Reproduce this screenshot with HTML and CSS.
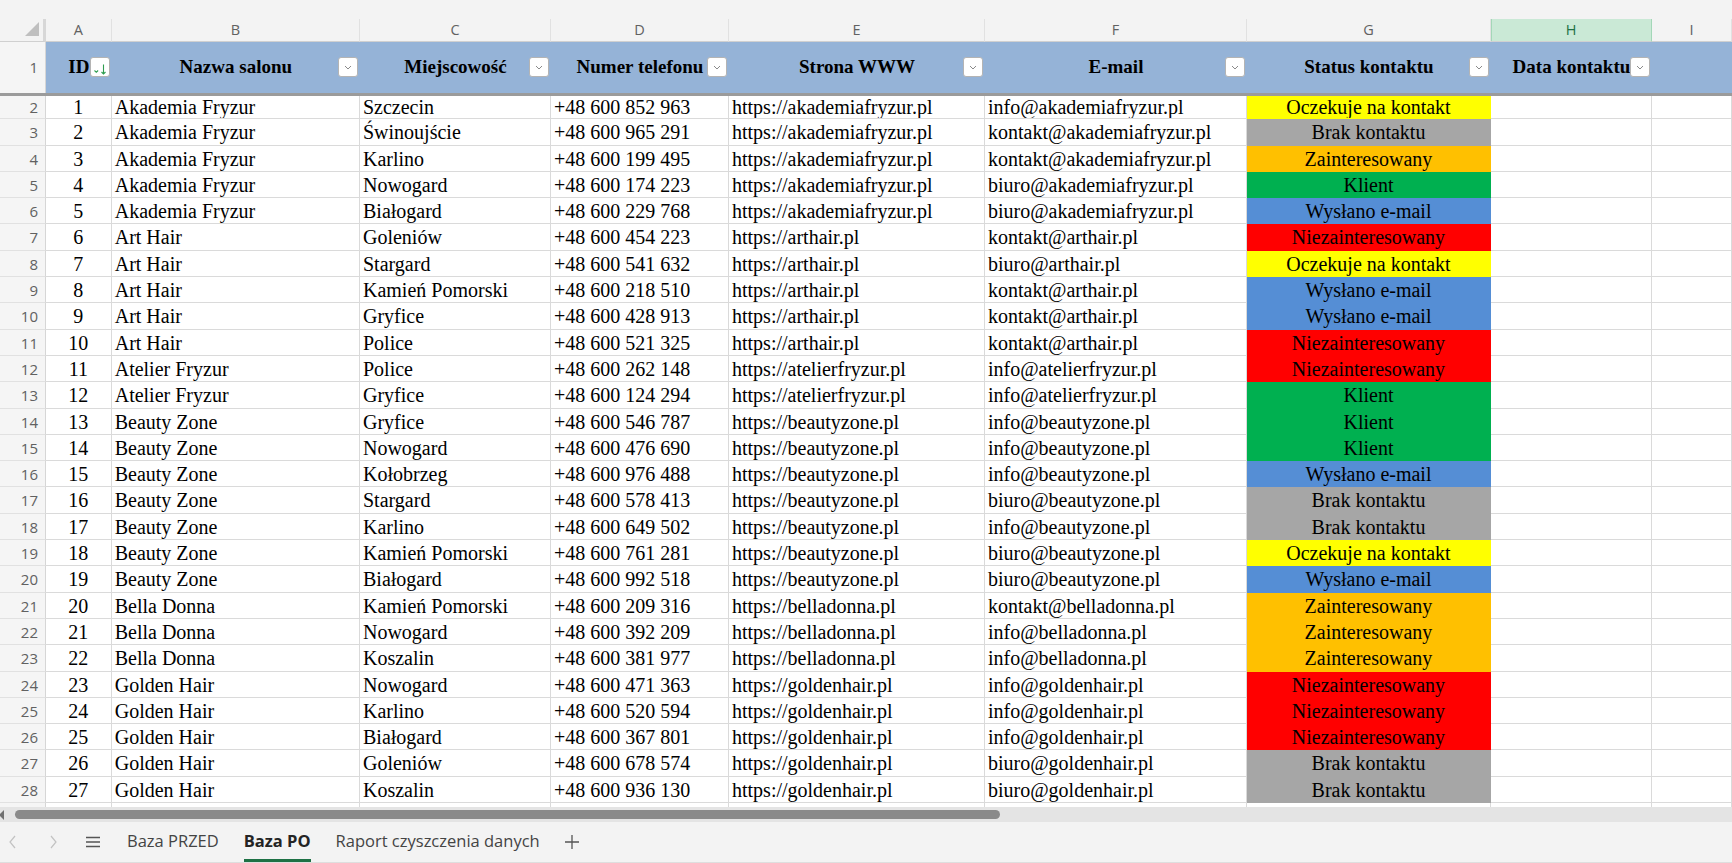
FILE: index.html
```html
<!DOCTYPE html>
<html lang="pl">
<head>
  <meta charset="UTF-8" />
  <title>Baza PO</title>
  <link rel="stylesheet" href="styles.css">
</head>
<body>

<div class="app">
  <div class="topstrip"></div>

  <div class="sheet">
    <div class="row colhead">
      <div class="corner"><span class="tri"></span></div>
      <div class="col">A</div>
      <div class="col">B</div>
      <div class="col">C</div>
      <div class="col">D</div>
      <div class="col">E</div>
      <div class="col">F</div>
      <div class="col">G</div>
      <div class="col sel">H</div>
      <div class="col">I</div>
    </div>

    <div class="row head">
      <div class="rh">1</div>
      <div class="hc">ID<span class="filter"><svg width="20" height="20" viewBox="0 0 20 20"><path d="M4.5 13.5 l1.8 1.8 l1.8 -1.8" fill="none" stroke="#2e9d4f" stroke-width="1.1"/><path d="M13.5 7.5 v9.5 M11.5 15 l2 2 l2 -2" fill="none" stroke="#2e9d4f" stroke-width="1.1"/></svg></span></div>
      <div class="hc">Nazwa salonu<span class="filter"><svg width="20" height="20" viewBox="0 0 20 20"><path d="M7 9 l3 3 l3 -3" fill="none" stroke="#8a8a8a" stroke-width="1"/></svg></span></div>
      <div class="hc">Miejscowość<span class="filter"><svg width="20" height="20" viewBox="0 0 20 20"><path d="M7 9 l3 3 l3 -3" fill="none" stroke="#8a8a8a" stroke-width="1"/></svg></span></div>
      <div class="hc">Numer telefonu<span class="filter"><svg width="20" height="20" viewBox="0 0 20 20"><path d="M7 9 l3 3 l3 -3" fill="none" stroke="#8a8a8a" stroke-width="1"/></svg></span></div>
      <div class="hc">Strona WWW<span class="filter"><svg width="20" height="20" viewBox="0 0 20 20"><path d="M7 9 l3 3 l3 -3" fill="none" stroke="#8a8a8a" stroke-width="1"/></svg></span></div>
      <div class="hc">E-mail<span class="filter"><svg width="20" height="20" viewBox="0 0 20 20"><path d="M7 9 l3 3 l3 -3" fill="none" stroke="#8a8a8a" stroke-width="1"/></svg></span></div>
      <div class="hc">Status kontaktu<span class="filter"><svg width="20" height="20" viewBox="0 0 20 20"><path d="M7 9 l3 3 l3 -3" fill="none" stroke="#8a8a8a" stroke-width="1"/></svg></span></div>
      <div class="hc">Data kontaktu<span class="filter"><svg width="20" height="20" viewBox="0 0 20 20"><path d="M7 9 l3 3 l3 -3" fill="none" stroke="#8a8a8a" stroke-width="1"/></svg></span></div>
      <div class="hc"></div>
    </div>

    <div id="body"></div>
  </div>

  <div class="hscroll"><span class="arrow"></span><span class="thumb"></span></div>

  <div class="tabs">
    <span class="nav"><svg width="10" height="14" viewBox="0 0 10 14"><path d="M7 1 l-5 6 l5 6" fill="none" stroke="#c2c2c2" stroke-width="1.2"/></svg></span>
    <span class="nav"><svg width="10" height="14" viewBox="0 0 10 14"><path d="M3 1 l5 6 l-5 6" fill="none" stroke="#c2c2c2" stroke-width="1.2"/></svg></span>
    <span class="nav"><svg width="16" height="14" viewBox="0 0 16 14"><path d="M1 2.5 h14 M1 7 h14 M1 11.5 h14" stroke="#555" stroke-width="1.3"/></svg></span>
    <span class="tab first">Baza PRZED</span>
    <span class="tab active">Baza PO</span>
    <span class="tab">Raport czyszczenia danych</span>
    <span class="add"><svg width="16" height="16" viewBox="0 0 16 16"><path d="M8 1 v14 M1 8 h14" stroke="#555" stroke-width="1.3"/></svg></span>
  </div>
</div>

<script>
  const statusClass = {
    "Oczekuje na kontakt": "st-wait",
    "Brak kontaktu": "st-none",
    "Zainteresowany": "st-int",
    "Klient": "st-client",
    "Wysłano e-mail": "st-mail",
    "Niezainteresowany": "st-no"
  };

  const rows = [
    ["Akademia Fryzur", "Szczecin", "+48 600 852 963", "https://akademiafryzur.pl", "info@akademiafryzur.pl", "Oczekuje na kontakt"],
    ["Akademia Fryzur", "Świnoujście", "+48 600 965 291", "https://akademiafryzur.pl", "kontakt@akademiafryzur.pl", "Brak kontaktu"],
    ["Akademia Fryzur", "Karlino", "+48 600 199 495", "https://akademiafryzur.pl", "kontakt@akademiafryzur.pl", "Zainteresowany"],
    ["Akademia Fryzur", "Nowogard", "+48 600 174 223", "https://akademiafryzur.pl", "biuro@akademiafryzur.pl", "Klient"],
    ["Akademia Fryzur", "Białogard", "+48 600 229 768", "https://akademiafryzur.pl", "biuro@akademiafryzur.pl", "Wysłano e-mail"],
    ["Art Hair", "Goleniów", "+48 600 454 223", "https://arthair.pl", "kontakt@arthair.pl", "Niezainteresowany"],
    ["Art Hair", "Stargard", "+48 600 541 632", "https://arthair.pl", "biuro@arthair.pl", "Oczekuje na kontakt"],
    ["Art Hair", "Kamień Pomorski", "+48 600 218 510", "https://arthair.pl", "kontakt@arthair.pl", "Wysłano e-mail"],
    ["Art Hair", "Gryfice", "+48 600 428 913", "https://arthair.pl", "kontakt@arthair.pl", "Wysłano e-mail"],
    ["Art Hair", "Police", "+48 600 521 325", "https://arthair.pl", "kontakt@arthair.pl", "Niezainteresowany"],
    ["Atelier Fryzur", "Police", "+48 600 262 148", "https://atelierfryzur.pl", "info@atelierfryzur.pl", "Niezainteresowany"],
    ["Atelier Fryzur", "Gryfice", "+48 600 124 294", "https://atelierfryzur.pl", "info@atelierfryzur.pl", "Klient"],
    ["Beauty Zone", "Gryfice", "+48 600 546 787", "https://beautyzone.pl", "info@beautyzone.pl", "Klient"],
    ["Beauty Zone", "Nowogard", "+48 600 476 690", "https://beautyzone.pl", "info@beautyzone.pl", "Klient"],
    ["Beauty Zone", "Kołobrzeg", "+48 600 976 488", "https://beautyzone.pl", "info@beautyzone.pl", "Wysłano e-mail"],
    ["Beauty Zone", "Stargard", "+48 600 578 413", "https://beautyzone.pl", "biuro@beautyzone.pl", "Brak kontaktu"],
    ["Beauty Zone", "Karlino", "+48 600 649 502", "https://beautyzone.pl", "info@beautyzone.pl", "Brak kontaktu"],
    ["Beauty Zone", "Kamień Pomorski", "+48 600 761 281", "https://beautyzone.pl", "biuro@beautyzone.pl", "Oczekuje na kontakt"],
    ["Beauty Zone", "Białogard", "+48 600 992 518", "https://beautyzone.pl", "biuro@beautyzone.pl", "Wysłano e-mail"],
    ["Bella Donna", "Kamień Pomorski", "+48 600 209 316", "https://belladonna.pl", "kontakt@belladonna.pl", "Zainteresowany"],
    ["Bella Donna", "Nowogard", "+48 600 392 209", "https://belladonna.pl", "info@belladonna.pl", "Zainteresowany"],
    ["Bella Donna", "Koszalin", "+48 600 381 977", "https://belladonna.pl", "info@belladonna.pl", "Zainteresowany"],
    ["Golden Hair", "Nowogard", "+48 600 471 363", "https://goldenhair.pl", "info@goldenhair.pl", "Niezainteresowany"],
    ["Golden Hair", "Karlino", "+48 600 520 594", "https://goldenhair.pl", "info@goldenhair.pl", "Niezainteresowany"],
    ["Golden Hair", "Białogard", "+48 600 367 801", "https://goldenhair.pl", "info@goldenhair.pl", "Niezainteresowany"],
    ["Golden Hair", "Goleniów", "+48 600 678 574", "https://goldenhair.pl", "biuro@goldenhair.pl", "Brak kontaktu"],
    ["Golden Hair", "Koszalin", "+48 600 936 130", "https://goldenhair.pl", "biuro@goldenhair.pl", "Brak kontaktu"]
  ];

  const body = document.getElementById("body");
  rows.forEach((r, i) => {
    const row = document.createElement("div");
    row.className = i === 0 ? "row data first" : "row data";
    row.innerHTML = `<div class="rh">${i + 2}</div><div class="c id">${i + 1}</div>` +
      r.slice(0, 5).map(v => `<div class="c">${v}</div>`).join("") +
      `<div class="c status ${statusClass[r[5]]}">${r[5]}</div><div class="c"></div><div class="c"></div>`;
    body.appendChild(row);
  });

  // kolejny, pusty wiersz (widoczny tylko kawałek)
  const last = document.createElement("div");
  last.className = "row data";
  last.innerHTML = `<div class="rh"></div>` + "<div class=\"c\"></div>".repeat(9);
  body.appendChild(last);
</script>

</body>
</html>
```

FILE: styles.css
```css
html, body {
  margin:0; overflow:hidden; background:#fff;
}
.app {
  width:1732px; height:863px;
  display:flex; flex-direction:column;
}
.topstrip {
  height:19px; background:#f3f3f3; flex:none;
}
.sheet {
  height:788px; flex:none; overflow:hidden;
}
.row {
  display:grid;
  grid-template-columns: 46px 65.7px 248.3px 191px 178px 256px 262px 244px 161px 80px;
}
.row > div {
  box-sizing:border-box;
  white-space:nowrap; overflow:hidden;
}

/* litery kolumn */
.colhead {
  height:23px; background:#f3f3f3;
}
.corner {
  position:relative;
  display:flex; align-items:flex-end; justify-content:flex-end;
  padding:0 4px 5px 0;
  border-right:3px solid #d7d7d7;
  border-bottom:1px solid #d0d0d0;
}
.corner::before {
  content:""; position:absolute; right:-3px; top:-14px;
  width:3px; height:14px; background:#d7d7d7;
}
.tri {
  width:0; height:0;
  border-left:14px solid transparent;
  border-bottom:14px solid #bfbfbf;
}
.col {
  font-family:'Segoe UI', 'Open Sans', sans-serif;
  font-size:14.5px; color:#616161;
  text-align:center; line-height:22px;
  border-right:1px solid #e1e1e1;
  border-bottom:1px solid #d0d0d0;
}
.col.sel {
  background:#cae9d6; color:#1e7145;
  border-right-color:#a3d7b8;
  box-shadow:inset 1px 0 #a3d7b8;
}

/* numery wierszy */
.rh {
  background:#f5f5f5;
  font-family:'Segoe UI', 'Open Sans', sans-serif;
  font-size:15px; color:#616161;
  text-align:right; padding-right:7px;
  border-right:1px solid #d6d6d6;
  border-bottom:1px solid #e1e1e1;
}

/* naglowek tabeli */
.head {
  height:51px;
  border-bottom:3px solid #9b9b9b;
}
.head .rh {
  line-height:51px; border-bottom:none;
}
.hc {
  position:relative;
  background:#95b3d7;
  display:flex; align-items:center; justify-content:center;
  font-family:'Liberation Serif', 'Times New Roman', serif;
  font-weight:700; font-size:19px; color:#000;
  padding-bottom:1px;
}
.filter {
  position:absolute; right:2px; top:15px;
  width:20px; height:20px; box-sizing:border-box;
  background:#fff; border:1px solid #b4b4b4; border-radius:3px;
  display:flex; align-items:center; justify-content:center;
}
.filter svg {
  display:block; flex:none;
}

/* dane */
.data {
  height:26.3px;
}
.data.first {
  height:23.3px;
}
.data > div {
  line-height:26.3px;
}
.data.first > div {
  line-height:23.3px;
}
.c {
  font-family:'Liberation Serif', 'Times New Roman', serif;
  font-size:20px; color:#000;
  padding:0 3px;
  border-right:1px solid #dadada;
  border-bottom:1px solid #dadada;
}
.c.id, .c.status {
  text-align:center;
}
.status {
  border-color:transparent;
}
.st-wait { background:#ffff00; }
.st-none { background:#a6a6a6; }
.st-int { background:#ffc000; }
.st-client { background:#00b050; }
.st-mail { background:#558ed5; }
.st-no { background:#ff0000; }

/* pasek przewijania */
.hscroll {
  height:15px; flex:none;
  background:#e4e4e4;
  display:flex; align-items:center;
}
.arrow {
  width:0; height:0; margin-left:-1px;
  border-right:5px solid #707070;
  border-top:5px solid transparent;
  border-bottom:5px solid transparent;
}
.thumb {
  width:985px; height:9px; margin-left:11px;
  background:#8a8a8a; border-radius:5px;
}

/* zakladki arkuszy */
.tabs {
  height:41px; flex:none; box-sizing:border-box;
  background:#f3f3f3;
  border-bottom:1px solid #dedede;
  display:flex; align-items:stretch;
  padding-left:3px;
  font-family:'Segoe UI', 'Open Sans', sans-serif;
  font-size:16.5px; color:#444;
}
.nav {
  width:20px; margin-right:20px;
  display:flex; align-items:center; justify-content:center;
}
.nav:nth-child(3) {
  margin-right:0;
}
.tab {
  margin:0 12.5px;
  display:flex; align-items:center;
  border-bottom:3px solid transparent;
}
.tab.first {
  margin-left:24px;
}
.tab.active {
  font-weight:700; color:#242424;
  border-bottom-color:#1e7145;
}
.add {
  width:20px; margin-left:10px;
  display:flex; align-items:center; justify-content:center;
}
```
